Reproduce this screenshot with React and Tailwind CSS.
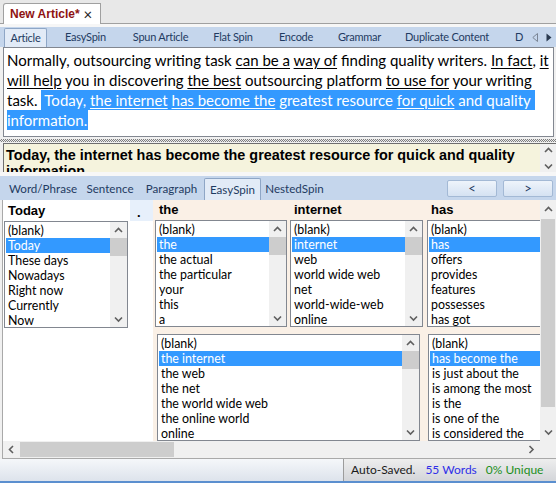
import React from "react";

const Chevron = ({ dir = "up" }) => {
  const vert = dir === "up" || dir === "down";
  const pts = {
    up: "1,5 4.5,1.5 8,5",
    down: "1,1.5 4.5,5 8,1.5",
    left: "5,1 1.5,4.5 5,8",
    right: "1.5,1 5,4.5 1.5,8",
  }[dir];
  return (
    <svg width={vert ? 9 : 7} height={vert ? 7 : 9} viewBox={vert ? "0 0 9 7" : "0 0 7 9"}>
      <polyline points={pts} fill="none" stroke="#5f5f5f" strokeWidth="1.6" />
    </svg>
  );
};

function ListBox({ items, sel, className = "" }) {
  return (
    <div className={`flex shrink-0 border border-[#828790] bg-white overflow-hidden ${className}`}>
      <div className="flex-1 min-w-0 pt-[1px] pl-[1px]">
        {items.map((t, i) => (
          <div
            key={i}
            className={`h-[15px] leading-[15px] px-[2px] whitespace-nowrap text-[12.4px] ${
              i === sel ? "bg-[#3399ff] text-white" : "text-black"
            }`}
          >
            {t}
          </div>
        ))}
      </div>
      <div className="w-[17px] shrink-0 bg-[#f0f0f0] flex flex-col">
        <div className="h-[16px] flex items-center justify-center">
          <Chevron dir="up" />
        </div>
        <div className="h-[18px] bg-[#cdcdcd]" />
        <div className="flex-1" />
        <div className="h-[16px] flex items-center justify-center">
          <Chevron dir="down" />
        </div>
      </div>
    </div>
  );
}

const U = ({ children }) => <span className="underline underline-offset-[2px]">{children}</span>;

export default function App() {
  return (
    <div className="w-[556px] h-[483px] overflow-hidden bg-[#f0f0f0] flex flex-col font-[Lato,sans-serif] text-black">
      {/* document tab bar */}
      <div className="h-[24px] shrink-0 bg-[#e8e8e8] border-b border-[#a0a0a0] flex items-end pl-[3px]">
        <div className="h-[21px] -mb-px w-[98px] bg-white border border-b-0 border-[#a0a0a0] rounded-tl-[3px] flex items-center pl-[6px] gap-[4px]">
          <span className="font-['Liberation_Sans',Arial,sans-serif] font-bold text-[12px] text-[#8e1212]">New Article*</span>
          <span className="text-[15px] leading-none text-[#222]">×</span>
        </div>
      </div>
      <div className="h-[3px] shrink-0 bg-[#f6f6f6]" />

      {/* top tabs */}
      <div className="h-[20px] shrink-0 bg-[#c5d6ec] flex items-end text-[11px] tracking-[-0.25px] text-[#1f3b62]">
        <div className="ml-[4px] w-[43px] h-[19px] bg-[#e2ebf7] border border-b-0 border-[#8ea6c6] rounded-t-[2px] flex items-center justify-center">
          Article
        </div>
        <div className="w-[77px] h-[20px] flex items-center justify-center">EasySpin</div>
        <div className="w-[73px] h-[20px] flex items-center justify-center">Spun Article</div>
        <div className="w-[72px] h-[20px] flex items-center justify-center">Flat Spin</div>
        <div className="w-[54px] h-[20px] flex items-center justify-center">Encode</div>
        <div className="w-[73px] h-[20px] flex items-center justify-center">Grammar</div>
        <div className="w-[102px] h-[20px] flex items-center justify-center">Duplicate Content</div>
        <div className="h-[20px] flex items-center pl-[17px]">D</div>
        <div className="h-[20px] flex items-center pl-[9px] gap-[8px]">
          <svg width="6" height="9" viewBox="0 0 6 9">
            <polygon points="5.5,0.5 0.8,4.5 5.5,8.5" fill="none" stroke="#7a8595" strokeWidth="1" />
          </svg>
          <svg width="6" height="9" viewBox="0 0 6 9">
            <polygon points="0.5,0.5 5.5,4.5 0.5,8.5" fill="#2a3a50" />
          </svg>
        </div>
      </div>

      {/* article text */}
      <div className="ml-[3px] w-[551px] h-[90px] shrink-0 border border-[#828790] bg-white px-[3px] pt-[2px] text-[15px] leading-[20px] overflow-hidden">
        <div className="whitespace-nowrap">
          Normally, outsourcing writing task <U>can be a</U> <U>way of</U> finding quality writers. <U>In fact</U>, <U>it</U>
        </div>
        <div className="whitespace-nowrap">
          <U>will help</U> you in discovering <U>the best</U> outsourcing platform <U>to use for</U> your writing
        </div>
        <div className="whitespace-nowrap">
          task.{" "}
          <span className="bg-[#3399ff] text-white pl-[3px] pr-[4px] py-[1px]">
            Today, <U>the internet</U> <U>has become the</U> greatest resource <U>for quick</U> and quality
          </span>
        </div>
        <div className="whitespace-nowrap">
          <span className="bg-[#3399ff] text-white pr-[1px] py-[1px]">information.</span>
        </div>
      </div>

      {/* splitter */}
      <div className="h-[6px] shrink-0 pt-[2px]">
        <div className="h-[3px] bg-[conic-gradient(#7d7d7d_25%,#ececec_0_50%,#7d7d7d_0_75%,#ececec_0)] bg-[length:2px_2px]" />
      </div>

      {/* current sentence */}
      <div className="ml-[3px] w-[553px] h-[29px] shrink-0 border-t border-l border-[#6e6e6e] bg-[#f5f3dd] flex">
        <div className="flex-1 overflow-hidden pl-[2px] pt-[3px] font-['Liberation_Sans',Arial,sans-serif] font-bold text-[14.4px] leading-[16px]">
          <div className="whitespace-nowrap">Today, the internet has become the greatest resource for quick and quality</div>
          <div className="whitespace-nowrap">information.</div>
        </div>
        <div className="w-[16px] shrink-0 bg-[#f0f0f0] flex flex-col items-center justify-between pt-[3px] pb-[2px]">
          <Chevron dir="up" />
          <Chevron dir="down" />
        </div>
      </div>

      <div className="h-[4px] shrink-0 bg-[#f7f7f7]" />

      {/* spin tabs */}
      <div className="h-[24px] shrink-0 bg-[#c5d6ec] flex items-end text-[11.6px] text-[#1f3b62]">
        <div className="ml-[5px] w-[76px] h-[22px] flex items-center justify-center">Word/Phrase</div>
        <div className="w-[58px] h-[22px] flex items-center justify-center">Sentence</div>
        <div className="w-[65px] h-[22px] flex items-center justify-center">Paragraph</div>
        <div className="w-[57px] h-[22px] bg-[#e2ebf7] border border-b-0 border-[#8ea6c6] rounded-t-[2px] flex items-center justify-center">
          EasySpin
        </div>
        <div className="w-[67px] h-[22px] flex items-center justify-center">NestedSpin</div>
        <div className="ml-auto mr-[3px] mb-[3px] flex gap-[6px]">
          <div className="w-[50px] h-[17px] rounded-[2px] border border-[#a3b9d5] bg-gradient-to-b from-[#eef4fb] to-[#d5e2f2] flex items-center justify-center text-[13px] leading-none text-[#1f3b62]">
            &lt;
          </div>
          <div className="w-[50px] h-[17px] rounded-[2px] border border-[#a3b9d5] bg-gradient-to-b from-[#eef4fb] to-[#d5e2f2] flex items-center justify-center text-[13px] leading-none text-[#1f3b62]">
            &gt;
          </div>
        </div>
      </div>

      {/* spin panel */}
      <div className="ml-[2px] shrink-0 border-l border-b border-[#a9a9a9] flex flex-col">
        <div className="h-[241px] flex">
          {/* column 1 */}
          <div className="w-[127px] shrink-0 bg-white flex flex-col">
            <div className="h-[21px] pl-[5px] flex items-center font-['Liberation_Sans',Arial,sans-serif] font-bold text-[13px]">
              Today
            </div>
            <ListBox
              className="ml-[1px] w-[124px] h-[107px]"
              sel={1}
              items={["(blank)", "Today", "These days", "Nowadays", "Right now", "Currently", "Now"]}
            />
          </div>
          {/* column 2 */}
          <div className="w-[23px] shrink-0 flex flex-col">
            <div className="h-[21px] bg-[#e7f0fb] pl-[7px] pt-[6px] font-['Liberation_Sans',Arial,sans-serif] font-bold text-[13px] leading-[13px]">
              .
            </div>
            <div className="flex-1 bg-white" />
          </div>
          {/* sentence columns */}
          <div className="w-[387px] shrink-0 bg-[#faf0e6] overflow-hidden flex flex-col">
            <div className="h-[21px] flex font-['Liberation_Sans',Arial,sans-serif] font-bold text-[13px]">
              <div className="w-[136px] shrink-0 pl-[6px] flex items-center">the</div>
              <div className="w-[136px] shrink-0 pl-[5px] flex items-center">internet</div>
              <div className="w-[136px] shrink-0 pl-[6px] flex items-center">has</div>
            </div>
            <div className="flex">
              <ListBox
                className="ml-[2px] w-[132px] h-[107px]"
                sel={1}
                items={["(blank)", "the", "the actual", "the particular", "your", "this", "a"]}
              />
              <ListBox
                className="ml-[3px] w-[133px] h-[107px]"
                sel={1}
                items={["(blank)", "internet", "web", "world wide web", "net", "world-wide-web", "online"]}
              />
              <ListBox
                className="ml-[4px] w-[132px] h-[107px]"
                sel={1}
                items={["(blank)", "has", "offers", "provides", "features", "possesses", "has got"]}
              />
            </div>
            <div className="flex mt-[7px]">
              <ListBox
                className="ml-[4px] w-[263px] h-[107px]"
                sel={1}
                items={["(blank)", "the internet", "the web", "the net", "the world wide web", "the online world", "online"]}
              />
              <ListBox
                className="ml-[8px] w-[132px] h-[107px]"
                sel={1}
                items={["(blank)", "has become the", "is just about the", "is among the most", "is the", "is one of the", "is considered the"]}
              />
            </div>
          </div>
          {/* outer vertical scrollbar */}
          <div className="w-[16px] shrink-0 bg-[#f0f0f0] flex flex-col">
            <div className="h-[19px] flex items-center justify-center">
              <Chevron dir="up" />
            </div>
            <div className="h-[188px] mx-[1px] bg-[#cdcdcd]" />
            <div className="flex-1" />
            <div className="h-[17px] flex items-center justify-center">
              <Chevron dir="down" />
            </div>
          </div>
        </div>
        {/* horizontal scrollbar */}
        <div className="h-[17px] flex bg-[#f0f0f0]">
          <div className="w-[17px] flex items-center justify-center">
            <Chevron dir="left" />
          </div>
          <div className="w-[154px] my-[1px] bg-[#cdcdcd]" />
          <div className="flex-1" />
          <div className="w-[17px] flex items-center justify-center">
            <Chevron dir="right" />
          </div>
          <div className="w-[16px]" />
        </div>
      </div>

      {/* status bar */}
      <div className="h-[24px] shrink-0 flex flex-col">
        <div className="flex-1 flex">
          <div className="w-[343px] bg-gradient-to-b from-[#f5f7fa] to-[#dde3ec]" />
          <div className="flex-1 border-l border-[#9c9c9c] bg-gradient-to-b from-[#eeeeee] to-[#d3d5d9] flex items-center pl-[7px] text-[12px] whitespace-nowrap">
            <span className="text-[#1a1a1a]">Auto-Saved.</span>
            <span className="ml-[10px] text-[#2f2fe8]">55 Words</span>
            <span className="ml-[9px] text-[#1c8f1c]">0% Unique</span>
          </div>
        </div>
        <div className="h-[2px] bg-[#5b8fcf]" />
      </div>
    </div>
  );
}
